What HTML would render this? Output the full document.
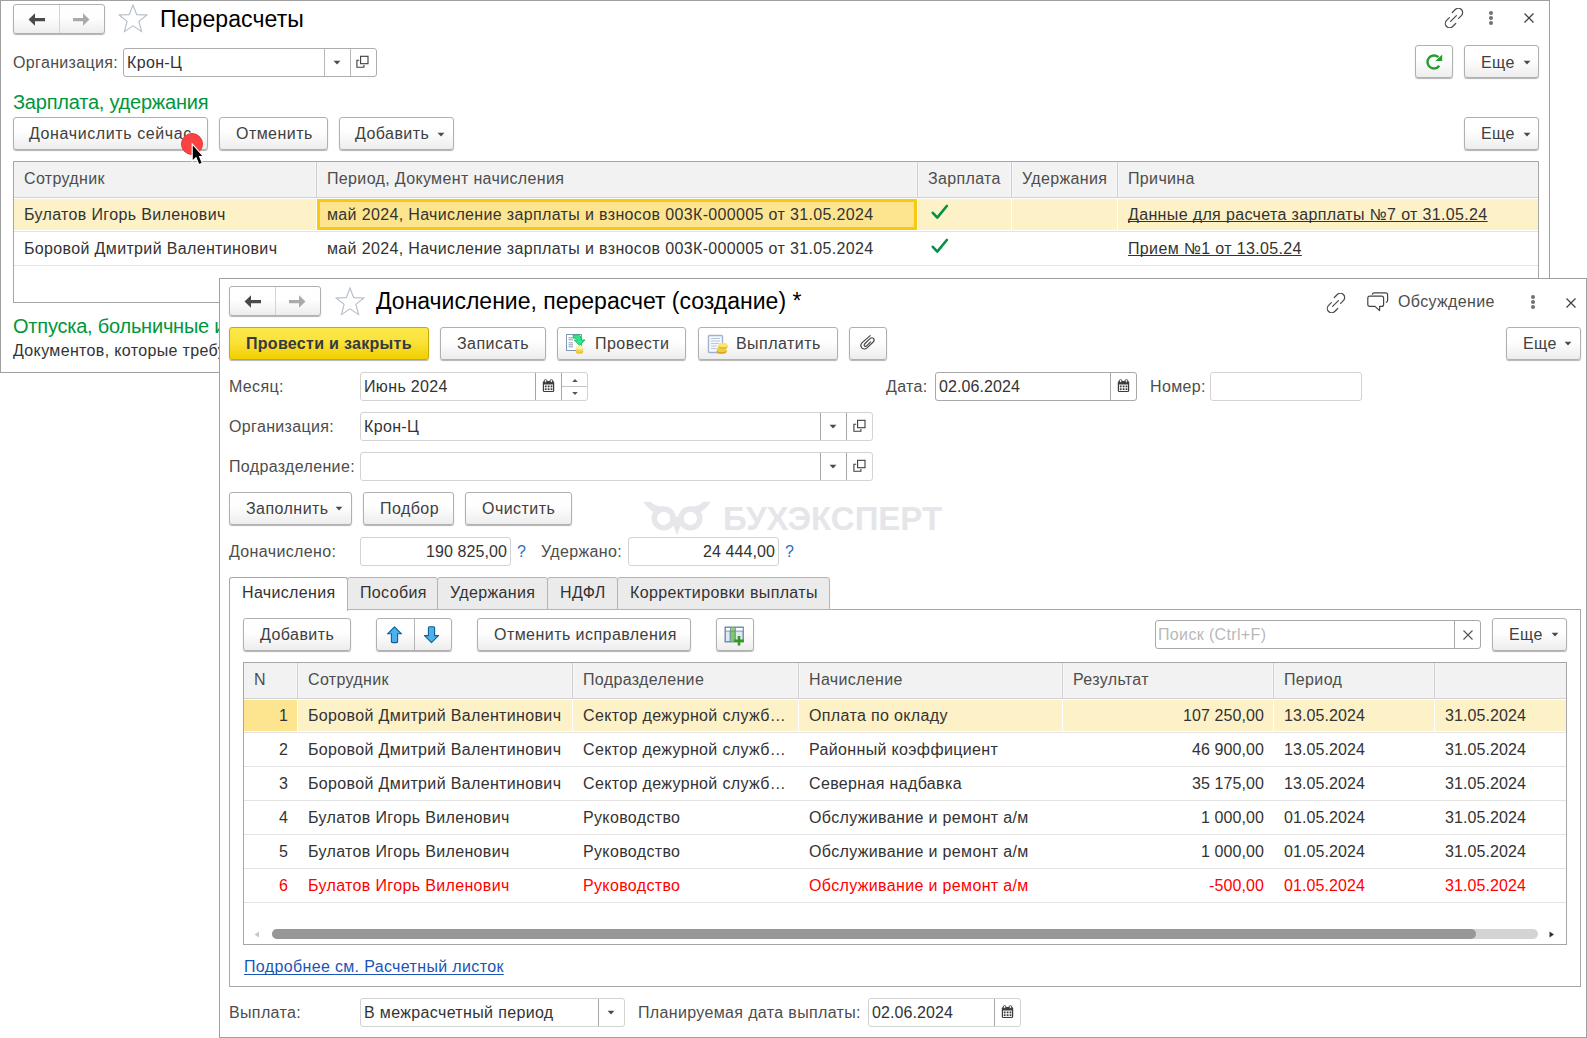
<!DOCTYPE html>
<html><head><meta charset="utf-8"><style>
html,body{margin:0;padding:0;background:#fff;width:1587px;height:1038px;overflow:hidden;position:relative}
.t{position:absolute;white-space:nowrap;font-family:"Liberation Sans", sans-serif;line-height:1;letter-spacing:0.35px}
.t u{text-decoration-skip-ink:none;text-underline-offset:1px}
.b{position:absolute}
.btn{position:absolute;border:1px solid #b0b0b0;border-radius:3px;background:linear-gradient(#ffffff 0%,#fefefe 45%,#ededed 100%);box-shadow:0 1px 1px rgba(0,0,0,0.30)}
</style></head><body>
<div class="b" style="left:0px;top:0px;width:1550px;height:373px;border:1px solid #a0a0a0;box-sizing:border-box;background:#fff"></div>
<div class="btn" style="left:13px;top:4px;width:90px;height:28px;"></div>
<div class="b" style="left:59px;top:5px;width:1px;height:28px;background:#d4d4d4"></div>
<svg class="b" style="left:28px;top:13px" width="18" height="14" viewBox="0 0 18 14"><polygon points="0.5,6.5 7,0.3 7,5 17,5 17,8.2 7,8.2 7,12.7" fill="#4a4a4a"/></svg>
<svg class="b" style="left:72px;top:13px" width="18" height="14" viewBox="0 0 18 14"><polygon points="17.5,6.5 11,0.3 11,5 1,5 1,8.2 11,8.2 11,12.7" fill="#aaaaaa"/></svg>
<svg class="b" style="left:118px;top:4px" width="30" height="29" viewBox="0 0 30 29"><polygon points="15,1 18.7,10.6 28.8,11 20.9,17.4 23.6,27.6 15,21.8 6.4,27.6 9.1,17.4 1.2,11 11.3,10.6" fill="none" stroke="#b4bcc6" stroke-width="1.1" stroke-linejoin="miter"/></svg>
<div class="t" style="left:160px;top:8px;font-size:23px;color:#000;font-weight:normal;letter-spacing:0.1px">Перерасчеты</div>
<svg class="b" style="left:1444px;top:8px" width="20" height="20" viewBox="0 0 20 20"><path d="M8.3 4.5 L11.3 1.5 A4.3 4.3 0 0 1 17.4 7.6 L14.6 10.4 M5.4 9.6 L2.6 12.4 A4.3 4.3 0 0 0 8.7 18.5 L11.7 15.5 M6.6 13.4 L12.4 7.6" fill="none" stroke="#4d4d4d" stroke-width="1.25" stroke-linecap="round"/></svg>
<div class="b" style="left:1489px;top:10.5px;width:4px;height:4px;border-radius:2px;background:#707070"></div>
<div class="b" style="left:1489px;top:15.5px;width:4px;height:4px;border-radius:2px;background:#707070"></div>
<div class="b" style="left:1489px;top:20.5px;width:4px;height:4px;border-radius:2px;background:#707070"></div>
<svg class="b" style="left:1524px;top:13px" width="10" height="10" viewBox="0 0 10 10"><path d="M0.5 0.5 L9.5 9.5 M9.5 0.5 L0.5 9.5" stroke="#3d3d3d" stroke-width="1.2"/></svg>
<div class="t" style="left:13px;top:55px;font-size:16px;color:#4d4d4d;font-weight:normal;">Организация:</div>
<div class="b" style="left:123px;top:48px;width:252px;height:27px;border:1px solid #adadad;border-radius:3px;background:#fff"></div>
<div class="b" style="left:324px;top:49px;width:1px;height:27px;background:#b8b8b8"></div>
<div class="b" style="left:350px;top:49px;width:1px;height:27px;background:#b8b8b8"></div>
<div class="t" style="left:127px;top:55px;font-size:16px;color:#333333;font-weight:normal;">Крон-Ц</div>
<svg class="b" style="left:333px;top:60px" width="8" height="6" viewBox="0 0 8 6"><polygon points="0.6,0.8 7.4,0.8 4,4.4" fill="#4a4a4a"/></svg>
<svg class="b" style="left:356px;top:55px" width="14" height="14" viewBox="0 0 14 14"><rect x="4.6" y="1.3" width="7.4" height="7.4" fill="none" stroke="#3d3d3d" stroke-width="1.1"/><path d="M3.2 5.2 H0.9 V12.3 H7.9 V10" fill="none" stroke="#3d3d3d" stroke-width="1.1"/></svg>
<div class="btn" style="left:1415px;top:45px;width:36px;height:31px;"></div>
<svg class="b" style="left:1424px;top:52px" width="20" height="20" viewBox="0 0 20 20"><path d="M15.3 13.7 A6.5 6.5 0 1 1 14.4 5.2" fill="none" stroke="#22a02a" stroke-width="2.4"/><polygon points="11.4,9 18.2,2.6 18.2,9" fill="#22a02a"/></svg>
<div class="btn" style="left:1464px;top:45px;width:73px;height:31px;"></div>
<div class="t" style="left:1481px;top:55px;font-size:16px;color:#404040;font-weight:normal;letter-spacing:0.45px">Еще</div>
<svg class="b" style="left:1523px;top:60px" width="8" height="6" viewBox="0 0 8 6"><polygon points="0.6,0.8 7.4,0.8 4,4.4" fill="#4a4a4a"/></svg>
<div class="t" style="left:13px;top:92px;font-size:20px;color:#00963c;font-weight:normal;letter-spacing:-0.22px">Зарплата, удержания</div>
<div class="btn" style="left:13px;top:117px;width:193px;height:31px;"></div>
<div class="t" style="left:29px;top:126px;font-size:16px;color:#404040;font-weight:normal;letter-spacing:0.6px">Доначислить сейчас</div>
<div class="btn" style="left:219px;top:117px;width:107px;height:31px;"></div>
<div class="t" style="left:236px;top:126px;font-size:16px;color:#404040;font-weight:normal;letter-spacing:0.45px">Отменить</div>
<div class="btn" style="left:339px;top:117px;width:113px;height:31px;"></div>
<div class="t" style="left:355px;top:126px;font-size:16px;color:#404040;font-weight:normal;letter-spacing:0.45px">Добавить</div>
<svg class="b" style="left:437px;top:132px" width="8" height="6" viewBox="0 0 8 6"><polygon points="0.6,0.8 7.4,0.8 4,4.4" fill="#4a4a4a"/></svg>
<div class="btn" style="left:1464px;top:117px;width:73px;height:31px;"></div>
<div class="t" style="left:1481px;top:126px;font-size:16px;color:#404040;font-weight:normal;letter-spacing:0.45px">Еще</div>
<svg class="b" style="left:1523px;top:132px" width="8" height="6" viewBox="0 0 8 6"><polygon points="0.6,0.8 7.4,0.8 4,4.4" fill="#4a4a4a"/></svg>
<div class="b" style="left:13px;top:161px;width:1526px;height:142px;border:1px solid #a6a6a6;box-sizing:border-box;background:#fff"></div>
<div class="b" style="left:14px;top:162px;width:1524px;height:35px;background:#f2f2f2"></div>
<div class="b" style="left:14px;top:197px;width:1524px;height:1px;background:#d2d2d2"></div>
<div class="b" style="left:316px;top:162px;width:1px;height:35px;background:#cbcbcb"></div>
<div class="b" style="left:315px;top:162px;width:1px;height:35px;background:#f8f8f8"></div>
<div class="b" style="left:317px;top:162px;width:1px;height:35px;background:#f8f8f8"></div>
<div class="b" style="left:917px;top:162px;width:1px;height:35px;background:#cbcbcb"></div>
<div class="b" style="left:916px;top:162px;width:1px;height:35px;background:#f8f8f8"></div>
<div class="b" style="left:918px;top:162px;width:1px;height:35px;background:#f8f8f8"></div>
<div class="b" style="left:1011px;top:162px;width:1px;height:35px;background:#cbcbcb"></div>
<div class="b" style="left:1010px;top:162px;width:1px;height:35px;background:#f8f8f8"></div>
<div class="b" style="left:1012px;top:162px;width:1px;height:35px;background:#f8f8f8"></div>
<div class="b" style="left:1117px;top:162px;width:1px;height:35px;background:#cbcbcb"></div>
<div class="b" style="left:1116px;top:162px;width:1px;height:35px;background:#f8f8f8"></div>
<div class="b" style="left:1118px;top:162px;width:1px;height:35px;background:#f8f8f8"></div>
<div class="b" style="left:14px;top:199px;width:302px;height:31px;background:#fdf1c7"></div>
<div class="b" style="left:317px;top:199px;width:600px;height:31px;background:#fdf1c7"></div>
<div class="b" style="left:918px;top:199px;width:93px;height:31px;background:#fdf1c7"></div>
<div class="b" style="left:1012px;top:199px;width:105px;height:31px;background:#fdf1c7"></div>
<div class="b" style="left:1118px;top:199px;width:420px;height:31px;background:#fdf1c7"></div>
<div class="b" style="left:14px;top:231px;width:1524px;height:1px;background:#e4e4e4"></div>
<div class="b" style="left:14px;top:265px;width:1524px;height:1px;background:#e4e4e4"></div>
<div class="t" style="left:24px;top:171px;font-size:16px;color:#4d4d4d;font-weight:normal;">Сотрудник</div>
<div class="t" style="left:327px;top:171px;font-size:16px;color:#4d4d4d;font-weight:normal;">Период, Документ начисления</div>
<div class="t" style="left:928px;top:171px;font-size:16px;color:#4d4d4d;font-weight:normal;">Зарплата</div>
<div class="t" style="left:1022px;top:171px;font-size:16px;color:#4d4d4d;font-weight:normal;">Удержания</div>
<div class="t" style="left:1128px;top:171px;font-size:16px;color:#4d4d4d;font-weight:normal;">Причина</div>
<div class="b" style="left:317px;top:199px;width:600px;height:31px;background:#fde590;border:3px solid #f7c814;box-sizing:border-box"></div>
<div class="t" style="left:24px;top:207px;font-size:16px;color:#333333;font-weight:normal;">Булатов Игорь Виленович</div>
<div class="t" style="left:327px;top:207px;font-size:16px;color:#333333;font-weight:normal;">май 2024, Начисление зарплаты и взносов 003К-000005 от 31.05.2024</div>
<svg class="b" style="left:931px;top:204px" width="18" height="16" viewBox="0 0 18 16"><path d="M1.8 8.8 L6.3 13.6 L15.8 2" fill="none" stroke="#00924a" stroke-width="2.6" stroke-linecap="round" stroke-linejoin="round"/></svg>
<div class="t" style="left:1128px;top:207px;font-size:16px;color:#333333;font-weight:normal;"><u>Данные для расчета зарплаты №7 от 31.05.24</u></div>
<div class="t" style="left:24px;top:241px;font-size:16px;color:#333333;font-weight:normal;">Боровой Дмитрий Валентинович</div>
<div class="t" style="left:327px;top:241px;font-size:16px;color:#333333;font-weight:normal;">май 2024, Начисление зарплаты и взносов 003К-000005 от 31.05.2024</div>
<svg class="b" style="left:931px;top:238px" width="18" height="16" viewBox="0 0 18 16"><path d="M1.8 8.8 L6.3 13.6 L15.8 2" fill="none" stroke="#00924a" stroke-width="2.6" stroke-linecap="round" stroke-linejoin="round"/></svg>
<div class="t" style="left:1128px;top:241px;font-size:16px;color:#333333;font-weight:normal;"><u>Прием №1 от 13.05.24</u></div>
<div class="t" style="left:13px;top:316px;font-size:20px;color:#00963c;font-weight:normal;letter-spacing:-0.22px">Отпуска, больничные и прочие начисления</div>
<div class="t" style="left:13px;top:343px;font-size:16px;color:#333333;font-weight:normal;">Документов, которые требуют перерасчета нет</div>
<div class="b" style="left:181px;top:133px;width:22px;height:22px;border-radius:11px;background:#fe4242;border:1px solid #e03838;box-sizing:border-box"></div>
<svg class="b" style="left:190px;top:142px" width="16" height="25" viewBox="0 0 16 25"><path d="M2.2 2 L2.2 19.3 L6 15.6 L8.9 22.6 L12.4 21.2 L9.6 14.6 L13.6 14.6 Z" fill="#000" stroke="#fff" stroke-width="1.1" stroke-linejoin="miter"/></svg>
<div class="b" style="left:219px;top:278px;width:1368px;height:760px;border:1px solid #a0a0a0;box-sizing:border-box;background:#fff"></div>
<div class="btn" style="left:229px;top:286px;width:90px;height:28px;"></div>
<div class="b" style="left:275px;top:287px;width:1px;height:28px;background:#d4d4d4"></div>
<svg class="b" style="left:244px;top:295px" width="18" height="14" viewBox="0 0 18 14"><polygon points="0.5,6.5 7,0.3 7,5 17,5 17,8.2 7,8.2 7,12.7" fill="#4a4a4a"/></svg>
<svg class="b" style="left:288px;top:295px" width="18" height="14" viewBox="0 0 18 14"><polygon points="17.5,6.5 11,0.3 11,5 1,5 1,8.2 11,8.2 11,12.7" fill="#aaaaaa"/></svg>
<svg class="b" style="left:335px;top:287px" width="30" height="29" viewBox="0 0 30 29"><polygon points="15,1 18.7,10.6 28.8,11 20.9,17.4 23.6,27.6 15,21.8 6.4,27.6 9.1,17.4 1.2,11 11.3,10.6" fill="none" stroke="#b4bcc6" stroke-width="1.1" stroke-linejoin="miter"/></svg>
<div class="t" style="left:376px;top:290px;font-size:23px;color:#000;font-weight:normal;letter-spacing:0px">Доначисление, перерасчет (создание) *</div>
<svg class="b" style="left:1326px;top:293px" width="20" height="20" viewBox="0 0 20 20"><path d="M8.3 4.5 L11.3 1.5 A4.3 4.3 0 0 1 17.4 7.6 L14.6 10.4 M5.4 9.6 L2.6 12.4 A4.3 4.3 0 0 0 8.7 18.5 L11.7 15.5 M6.6 13.4 L12.4 7.6" fill="none" stroke="#4d4d4d" stroke-width="1.25" stroke-linecap="round"/></svg>
<svg class="b" style="left:1367px;top:291px" width="22" height="21" viewBox="0 0 22 21"><g fill="none" stroke="#444" stroke-width="1.2" stroke-linejoin="round"><path d="M2.8 5.2 H14.6 Q16.6 5.2 16.6 7.2 V13.4 Q16.6 15.4 14.6 15.4 H12.6 V19.6 L8 15.4 H2.8 Q0.8 15.4 0.8 13.4 V7.2 Q0.8 5.2 2.8 5.2 Z"/><path d="M5.2 3.6 Q5.6 1.8 7.4 1.8 H18.6 Q20.6 1.8 20.6 3.8 V9.6 Q20.6 11.4 18.8 11.4"/></g></svg>
<div class="t" style="left:1398px;top:294px;font-size:16px;color:#4d4d4d;font-weight:normal;">Обсуждение</div>
<div class="b" style="left:1531px;top:295px;width:4px;height:4px;border-radius:2px;background:#707070"></div>
<div class="b" style="left:1531px;top:300px;width:4px;height:4px;border-radius:2px;background:#707070"></div>
<div class="b" style="left:1531px;top:305px;width:4px;height:4px;border-radius:2px;background:#707070"></div>
<svg class="b" style="left:1566px;top:298px" width="10" height="10" viewBox="0 0 10 10"><path d="M0.5 0.5 L9.5 9.5 M9.5 0.5 L0.5 9.5" stroke="#3d3d3d" stroke-width="1.2"/></svg>
<div class="btn" style="left:229px;top:327px;width:198px;height:31px;background:linear-gradient(#fbe74a 0%,#fae23a 45%,#f1cf00 100%);border-color:#c9ac00"></div>
<div class="t" style="left:246px;top:336px;font-size:16px;color:#333a44;font-weight:bold;letter-spacing:0.3px">Провести и закрыть</div>
<div class="btn" style="left:440px;top:327px;width:104px;height:31px;"></div>
<div class="t" style="left:457px;top:336px;font-size:16px;color:#404040;font-weight:normal;letter-spacing:0.45px">Записать</div>
<div class="btn" style="left:557px;top:327px;width:127px;height:31px;"></div>
<svg class="b" style="left:565px;top:333px" width="22" height="23" viewBox="0 0 22 23"><rect x="1.5" y="1.5" width="15" height="16" fill="#fff" stroke="#8596b2" stroke-width="1"/><path d="M3.5 4.8 H9 M3.5 6.8 H8 M3.5 9.8 H8 M3.5 11.8 H8 M3.5 13.8 H8" stroke="#8b9bb5" stroke-width="1"/><path d="M8 2.2 Q10.5 1.4 13.2 1.8 Q16.4 2.6 16.6 7 L20 7 L14.6 12.4 L9.2 7 L12.6 7 Q12.4 5 8.4 5 Z" fill="#2ee68c" stroke="#17a862" stroke-width="0.8" stroke-linejoin="round"/><ellipse cx="14.5" cy="18.8" rx="3.8" ry="2" fill="#e8c53a"/><ellipse cx="14.5" cy="16.6" rx="3.8" ry="2" fill="#f0d957"/><ellipse cx="14.5" cy="14.4" rx="3.8" ry="1.8" fill="#faf0a8"/></svg>
<div class="t" style="left:595px;top:336px;font-size:16px;color:#404040;font-weight:normal;letter-spacing:0.45px">Провести</div>
<div class="btn" style="left:698px;top:327px;width:138px;height:31px;"></div>
<svg class="b" style="left:707px;top:334px" width="22" height="22" viewBox="0 0 22 22"><rect x="1.5" y="1.5" width="14" height="17" rx="1" fill="#f4f8fc" stroke="#9fb4c8" stroke-width="1.4"/><path d="M4 4.5 H13 M4 7 H13 M4 9.5 H12 M4 12 H10 M4 14.5 H9" stroke="#b8c8d8" stroke-width="1.2"/><ellipse cx="14.6" cy="17.2" rx="5" ry="2.6" fill="#d9a81c"/><ellipse cx="14.6" cy="15.4" rx="5" ry="2.6" fill="#f0cf3c"/><ellipse cx="16" cy="12.6" rx="4.6" ry="2.4" fill="#e4b62a"/><ellipse cx="16" cy="11" rx="4.6" ry="2.3" fill="#fbe86a"/></svg>
<div class="t" style="left:736px;top:336px;font-size:16px;color:#404040;font-weight:normal;letter-spacing:0.45px">Выплатить</div>
<div class="btn" style="left:849px;top:327px;width:36px;height:31px;"></div>
<svg class="b" style="left:858px;top:334px" width="18" height="18" viewBox="0 0 18 18"><path d="M12.2 1.6 L4.2 8.6 Q1.6 11.2 3.8 13.8 Q6.4 16.2 9 13.8 L15.2 8 Q17 6 15.4 4.4 Q13.8 3 12 4.6 L6.6 10 Q5.6 11.2 6.6 12 Q7.6 12.8 8.6 11.8 L12.6 7.8" fill="none" stroke="#444" stroke-width="1.15" stroke-linecap="round"/></svg>
<div class="btn" style="left:1506px;top:327px;width:73px;height:31px;"></div>
<div class="t" style="left:1523px;top:336px;font-size:16px;color:#404040;font-weight:normal;letter-spacing:0.45px">Еще</div>
<svg class="b" style="left:1564px;top:341px" width="8" height="6" viewBox="0 0 8 6"><polygon points="0.6,0.8 7.4,0.8 4,4.4" fill="#4a4a4a"/></svg>
<div class="t" style="left:229px;top:379px;font-size:16px;color:#4d4d4d;font-weight:normal;">Месяц:</div>
<div class="b" style="left:360px;top:372px;width:226px;height:27px;border:1px solid #d3d3d3;border-radius:3px;background:#fff"></div>
<div class="b" style="left:535px;top:373px;width:1px;height:27px;background:#a6a6a6"></div>
<div class="b" style="left:561px;top:373px;width:1px;height:27px;background:#a6a6a6"></div>
<div class="t" style="left:364px;top:379px;font-size:16px;color:#333333;font-weight:normal;">Июнь 2024</div>
<svg class="b" style="left:542px;top:379px" width="13" height="14" viewBox="0 0 13 14"><rect x="0.8" y="2" width="11.4" height="11" rx="1.5" fill="#3d3d3d"/><rect x="2" y="5.5" width="9" height="6.5" fill="#fff"/><circle cx="3.6" cy="2" r="1.4" fill="#fff" stroke="#3d3d3d" stroke-width="0.9"/><circle cx="9.4" cy="2" r="1.4" fill="#fff" stroke="#3d3d3d" stroke-width="0.9"/><rect x="2.8" y="6.5" width="1.8" height="1.8" fill="#3d3d3d"/><rect x="2.8" y="9.3" width="1.8" height="1.8" fill="#3d3d3d"/><rect x="5.699999999999999" y="6.5" width="1.8" height="1.8" fill="#3d3d3d"/><rect x="5.699999999999999" y="9.3" width="1.8" height="1.8" fill="#3d3d3d"/><rect x="8.6" y="6.5" width="1.8" height="1.8" fill="#3d3d3d"/><rect x="8.6" y="9.3" width="1.8" height="1.8" fill="#3d3d3d"/></svg>
<div class="b" style="left:562px;top:386px;width:25px;height:1px;background:#c4c4c4"></div>
<svg class="b" style="left:571px;top:377px" width="8" height="20" viewBox="0 0 8 20"><polygon points="1.2,5 6.8,5 4,2" fill="#555"/><polygon points="1.2,15 6.8,15 4,18" fill="#555"/></svg>
<div class="t" style="left:886px;top:379px;font-size:16px;color:#4d4d4d;font-weight:normal;">Дата:</div>
<div class="b" style="left:935px;top:372px;width:200px;height:27px;border:1px solid #a8a8a8;border-radius:3px;background:#fff"></div>
<div class="b" style="left:1110px;top:373px;width:1px;height:27px;background:#a8a8a8"></div>
<div class="t" style="left:939px;top:379px;font-size:16px;color:#333333;font-weight:normal;;letter-spacing:0.1px">02.06.2024</div>
<svg class="b" style="left:1117px;top:379px" width="13" height="14" viewBox="0 0 13 14"><rect x="0.8" y="2" width="11.4" height="11" rx="1.5" fill="#3d3d3d"/><rect x="2" y="5.5" width="9" height="6.5" fill="#fff"/><circle cx="3.6" cy="2" r="1.4" fill="#fff" stroke="#3d3d3d" stroke-width="0.9"/><circle cx="9.4" cy="2" r="1.4" fill="#fff" stroke="#3d3d3d" stroke-width="0.9"/><rect x="2.8" y="6.5" width="1.8" height="1.8" fill="#3d3d3d"/><rect x="2.8" y="9.3" width="1.8" height="1.8" fill="#3d3d3d"/><rect x="5.699999999999999" y="6.5" width="1.8" height="1.8" fill="#3d3d3d"/><rect x="5.699999999999999" y="9.3" width="1.8" height="1.8" fill="#3d3d3d"/><rect x="8.6" y="6.5" width="1.8" height="1.8" fill="#3d3d3d"/><rect x="8.6" y="9.3" width="1.8" height="1.8" fill="#3d3d3d"/></svg>
<div class="t" style="left:1150px;top:379px;font-size:16px;color:#4d4d4d;font-weight:normal;">Номер:</div>
<div class="b" style="left:1210px;top:372px;width:150px;height:27px;border:1px solid #d3d3d3;border-radius:3px;background:#fff"></div>
<div class="t" style="left:229px;top:419px;font-size:16px;color:#4d4d4d;font-weight:normal;">Организация:</div>
<div class="b" style="left:360px;top:412px;width:511px;height:27px;border:1px solid #d3d3d3;border-radius:3px;background:#fff"></div>
<div class="b" style="left:820px;top:413px;width:1px;height:27px;background:#a6a6a6"></div>
<div class="b" style="left:846px;top:413px;width:1px;height:27px;background:#a6a6a6"></div>
<div class="t" style="left:364px;top:419px;font-size:16px;color:#333333;font-weight:normal;">Крон-Ц</div>
<svg class="b" style="left:829px;top:424px" width="8" height="6" viewBox="0 0 8 6"><polygon points="0.6,0.8 7.4,0.8 4,4.4" fill="#4a4a4a"/></svg>
<svg class="b" style="left:853px;top:419px" width="14" height="14" viewBox="0 0 14 14"><rect x="4.6" y="1.3" width="7.4" height="7.4" fill="none" stroke="#3d3d3d" stroke-width="1.1"/><path d="M3.2 5.2 H0.9 V12.3 H7.9 V10" fill="none" stroke="#3d3d3d" stroke-width="1.1"/></svg>
<div class="t" style="left:229px;top:459px;font-size:16px;color:#4d4d4d;font-weight:normal;">Подразделение:</div>
<div class="b" style="left:360px;top:452px;width:511px;height:27px;border:1px solid #d3d3d3;border-radius:3px;background:#fff"></div>
<div class="b" style="left:820px;top:453px;width:1px;height:27px;background:#a6a6a6"></div>
<div class="b" style="left:846px;top:453px;width:1px;height:27px;background:#a6a6a6"></div>
<svg class="b" style="left:829px;top:464px" width="8" height="6" viewBox="0 0 8 6"><polygon points="0.6,0.8 7.4,0.8 4,4.4" fill="#4a4a4a"/></svg>
<svg class="b" style="left:853px;top:459px" width="14" height="14" viewBox="0 0 14 14"><rect x="4.6" y="1.3" width="7.4" height="7.4" fill="none" stroke="#3d3d3d" stroke-width="1.1"/><path d="M3.2 5.2 H0.9 V12.3 H7.9 V10" fill="none" stroke="#3d3d3d" stroke-width="1.1"/></svg>
<div class="btn" style="left:229px;top:492px;width:121px;height:31px;"></div>
<div class="t" style="left:246px;top:501px;font-size:16px;color:#404040;font-weight:normal;letter-spacing:0.45px">Заполнить</div>
<svg class="b" style="left:335px;top:506px" width="8" height="6" viewBox="0 0 8 6"><polygon points="0.6,0.8 7.4,0.8 4,4.4" fill="#4a4a4a"/></svg>
<div class="btn" style="left:363px;top:492px;width:89px;height:31px;"></div>
<div class="t" style="left:380px;top:501px;font-size:16px;color:#404040;font-weight:normal;letter-spacing:0.45px">Подбор</div>
<div class="btn" style="left:465px;top:492px;width:105px;height:31px;"></div>
<div class="t" style="left:482px;top:501px;font-size:16px;color:#404040;font-weight:normal;letter-spacing:0.45px">Очистить</div>
<div class="t" style="left:723px;top:502px;font-size:33px;color:#e5e5ea;font-weight:bold;letter-spacing:0px">БУХЭКСПЕРТ</div>
<svg class="b" style="left:638px;top:496px" width="80" height="44" viewBox="0 0 80 44"><g fill="#e6e6eb"><circle cx="25.7" cy="22.4" r="12.1"/><circle cx="52.4" cy="22.4" r="12.1"/><polygon points="33,16 39,21.2 45.1,16 46,30 32,30"/><polygon points="35.2,29 42.9,29 39,39.2"/><path d="M5.3 5.8 L12.6 5.8 Q16.6 9.8 22.2 10.4 L25.5 10.6 L16.4 16.4 Q9.6 13.2 5.3 5.8 Z"/><path d="M72.8 5.8 L65.5 5.8 Q61.5 9.8 55.9 10.4 L52.6 10.6 L61.7 16.4 Q68.5 13.2 72.8 5.8 Z"/></g><circle cx="25.7" cy="22.4" r="6.6" fill="#fff"/><circle cx="52.4" cy="22.4" r="6.6" fill="#fff"/></svg>
<div class="t" style="left:229px;top:544px;font-size:16px;color:#4d4d4d;font-weight:normal;">Доначислено:</div>
<div class="b" style="left:360px;top:537px;width:149px;height:27px;border:1px solid #d3d3d3;border-radius:3px;background:#fff"></div>
<div class="t" style="right:1080px;top:544px;font-size:16px;color:#333333;;letter-spacing:0.1px">190 825,00</div>
<div class="t" style="left:517px;top:544px;font-size:16px;color:#1f6fc0;font-weight:normal;">?</div>
<div class="t" style="left:541px;top:544px;font-size:16px;color:#4d4d4d;font-weight:normal;">Удержано:</div>
<div class="b" style="left:628px;top:537px;width:149px;height:27px;border:1px solid #d3d3d3;border-radius:3px;background:#fff"></div>
<div class="t" style="right:812px;top:544px;font-size:16px;color:#333333;;letter-spacing:0.1px">24 444,00</div>
<div class="t" style="left:785px;top:544px;font-size:16px;color:#1f6fc0;font-weight:normal;">?</div>
<div class="b" style="left:229px;top:609px;width:1352px;height:378px;border:1px solid #a8a8a8;box-sizing:border-box;background:#fff"></div>
<div class="b" style="left:229px;top:577px;width:119px;height:34px;border:1px solid #a8a8a8;border-bottom:none;border-radius:3px 3px 0 0;box-sizing:border-box;background:#fff"></div>
<div class="t" style="left:242px;top:585px;font-size:16px;color:#333333;font-weight:normal;">Начисления</div>
<div class="b" style="left:347px;top:577px;width:91px;height:33px;border:1px solid #b4b4b4;border-radius:3px 3px 0 0;box-sizing:border-box;background:#ebebeb"></div>
<div class="t" style="left:360px;top:585px;font-size:16px;color:#333333;font-weight:normal;">Пособия</div>
<div class="b" style="left:437px;top:577px;width:111px;height:33px;border:1px solid #b4b4b4;border-radius:3px 3px 0 0;box-sizing:border-box;background:#ebebeb"></div>
<div class="t" style="left:450px;top:585px;font-size:16px;color:#333333;font-weight:normal;">Удержания</div>
<div class="b" style="left:547px;top:577px;width:71px;height:33px;border:1px solid #b4b4b4;border-radius:3px 3px 0 0;box-sizing:border-box;background:#ebebeb"></div>
<div class="t" style="left:560px;top:585px;font-size:16px;color:#333333;font-weight:normal;">НДФЛ</div>
<div class="b" style="left:617px;top:577px;width:213px;height:33px;border:1px solid #b4b4b4;border-radius:3px 3px 0 0;box-sizing:border-box;background:#ebebeb"></div>
<div class="t" style="left:630px;top:585px;font-size:16px;color:#333333;font-weight:normal;">Корректировки выплаты</div>
<div class="btn" style="left:243px;top:618px;width:106px;height:31px;"></div>
<div class="t" style="left:260px;top:627px;font-size:16px;color:#404040;font-weight:normal;letter-spacing:0.45px">Добавить</div>
<div class="btn" style="left:376px;top:618px;width:74px;height:31px;"></div>
<div class="b" style="left:414px;top:619px;width:1px;height:31px;background:#b4b4b4"></div>
<svg class="b" style="left:387px;top:626px" width="16" height="18" viewBox="0 0 16 18"><path d="M7.5 0.8 L14.5 7.8 H10.6 V15.6 Q10.6 16.6 9.6 16.6 H5.4 Q4.4 16.6 4.4 15.6 V7.8 H0.5 Z" fill="#4db0ec" stroke="#0f5d96" stroke-width="1.1" stroke-linejoin="round"/></svg>
<svg class="b" style="left:424px;top:626px" width="16" height="18" viewBox="0 0 16 18"><path d="M7.5 16.6 L14.5 9.6 H10.6 V1.8 Q10.6 0.8 9.6 0.8 H5.4 Q4.4 0.8 4.4 1.8 V9.6 H0.5 Z" fill="#4db0ec" stroke="#0f5d96" stroke-width="1.1" stroke-linejoin="round"/></svg>
<div class="btn" style="left:477px;top:618px;width:212px;height:31px;"></div>
<div class="t" style="left:494px;top:627px;font-size:16px;color:#404040;font-weight:normal;letter-spacing:0.45px">Отменить исправления</div>
<div class="btn" style="left:716px;top:618px;width:36px;height:31px;"></div>
<svg class="b" style="left:724px;top:626px" width="22" height="20" viewBox="0 0 22 20"><rect x="1.2" y="1.2" width="18" height="14.6" fill="#dfe9f3" stroke="#6f8aa4" stroke-width="1.4"/><rect x="6.4" y="1.8" width="4.6" height="13.6" fill="#7ccc5e"/><path d="M1.2 5 H19.2 M6.2 1.2 V15.8 M11.2 1.2 V15.8" stroke="#6f8aa4" stroke-width="1.2"/><rect x="2" y="2" width="4" height="2.4" fill="#fff"/><rect x="12" y="2" width="6.6" height="2.4" fill="#fff"/><rect x="6.9" y="2" width="3.8" height="2.4" fill="#8fd870"/><path d="M15 10 V19.5 M10.2 14.8 H19.8" stroke="#2f9a1c" stroke-width="2.6"/></svg>
<div class="b" style="left:1155px;top:620px;width:324px;height:27px;border:1px solid #a8a8a8;border-radius:3px;background:#fff"></div>
<div class="b" style="left:1454px;top:621px;width:1px;height:27px;background:#a8a8a8"></div>
<div class="t" style="left:1158px;top:627px;font-size:16px;color:#b8b8b8;font-weight:normal;">Поиск (Ctrl+F)</div>
<svg class="b" style="left:1463px;top:630px" width="10" height="10" viewBox="0 0 10 10"><path d="M0.5 0.5 L9.5 9.5 M9.5 0.5 L0.5 9.5" stroke="#555" stroke-width="1.1"/></svg>
<div class="btn" style="left:1492px;top:618px;width:73px;height:31px;"></div>
<div class="t" style="left:1509px;top:627px;font-size:16px;color:#404040;font-weight:normal;letter-spacing:0.45px">Еще</div>
<svg class="b" style="left:1551px;top:632px" width="8" height="6" viewBox="0 0 8 6"><polygon points="0.6,0.8 7.4,0.8 4,4.4" fill="#4a4a4a"/></svg>
<div class="b" style="left:243px;top:662px;width:1324px;height:283px;border:1px solid #a6a6a6;box-sizing:border-box;background:#fff"></div>
<div class="b" style="left:244px;top:663px;width:1322px;height:35px;background:#f2f2f2"></div>
<div class="b" style="left:244px;top:698px;width:1322px;height:1px;background:#d2d2d2"></div>
<div class="b" style="left:297px;top:663px;width:1px;height:35px;background:#cbcbcb"></div>
<div class="b" style="left:296px;top:663px;width:1px;height:35px;background:#f8f8f8"></div>
<div class="b" style="left:298px;top:663px;width:1px;height:35px;background:#f8f8f8"></div>
<div class="b" style="left:572px;top:663px;width:1px;height:35px;background:#cbcbcb"></div>
<div class="b" style="left:571px;top:663px;width:1px;height:35px;background:#f8f8f8"></div>
<div class="b" style="left:573px;top:663px;width:1px;height:35px;background:#f8f8f8"></div>
<div class="b" style="left:798px;top:663px;width:1px;height:35px;background:#cbcbcb"></div>
<div class="b" style="left:797px;top:663px;width:1px;height:35px;background:#f8f8f8"></div>
<div class="b" style="left:799px;top:663px;width:1px;height:35px;background:#f8f8f8"></div>
<div class="b" style="left:1062px;top:663px;width:1px;height:35px;background:#cbcbcb"></div>
<div class="b" style="left:1061px;top:663px;width:1px;height:35px;background:#f8f8f8"></div>
<div class="b" style="left:1063px;top:663px;width:1px;height:35px;background:#f8f8f8"></div>
<div class="b" style="left:1273px;top:663px;width:1px;height:35px;background:#cbcbcb"></div>
<div class="b" style="left:1272px;top:663px;width:1px;height:35px;background:#f8f8f8"></div>
<div class="b" style="left:1274px;top:663px;width:1px;height:35px;background:#f8f8f8"></div>
<div class="b" style="left:1434px;top:663px;width:1px;height:35px;background:#cbcbcb"></div>
<div class="b" style="left:1433px;top:663px;width:1px;height:35px;background:#f8f8f8"></div>
<div class="b" style="left:1435px;top:663px;width:1px;height:35px;background:#f8f8f8"></div>
<div class="t" style="left:254px;top:672px;font-size:16px;color:#4d4d4d;font-weight:normal;">N</div>
<div class="t" style="left:308px;top:672px;font-size:16px;color:#4d4d4d;font-weight:normal;">Сотрудник</div>
<div class="t" style="left:583px;top:672px;font-size:16px;color:#4d4d4d;font-weight:normal;">Подразделение</div>
<div class="t" style="left:809px;top:672px;font-size:16px;color:#4d4d4d;font-weight:normal;">Начисление</div>
<div class="t" style="left:1073px;top:672px;font-size:16px;color:#4d4d4d;font-weight:normal;">Результат</div>
<div class="t" style="left:1284px;top:672px;font-size:16px;color:#4d4d4d;font-weight:normal;">Период</div>
<div class="b" style="left:244px;top:700px;width:53px;height:31px;background:#fde590"></div>
<div class="b" style="left:298px;top:700px;width:274px;height:31px;background:#fdf1c7"></div>
<div class="b" style="left:573px;top:700px;width:225px;height:31px;background:#fdf1c7"></div>
<div class="b" style="left:799px;top:700px;width:263px;height:31px;background:#fdf1c7"></div>
<div class="b" style="left:1063px;top:700px;width:210px;height:31px;background:#fdf1c7"></div>
<div class="b" style="left:1274px;top:700px;width:160px;height:31px;background:#fdf1c7"></div>
<div class="b" style="left:1435px;top:700px;width:131px;height:31px;background:#fdf1c7"></div>
<div class="b" style="left:244px;top:732px;width:1322px;height:1px;background:#e4e4e4"></div>
<div class="t" style="right:1299px;top:708px;font-size:16px;color:#333333;;letter-spacing:0.1px">1</div>
<div class="t" style="left:308px;top:708px;font-size:16px;color:#333333;font-weight:normal;">Боровой Дмитрий Валентинович</div>
<div class="t" style="left:583px;top:708px;font-size:16px;color:#333333;font-weight:normal;">Сектор дежурной служб…</div>
<div class="t" style="left:809px;top:708px;font-size:16px;color:#333333;font-weight:normal;">Оплата по окладу</div>
<div class="t" style="right:323px;top:708px;font-size:16px;color:#333333;;letter-spacing:0.1px">107 250,00</div>
<div class="t" style="left:1284px;top:708px;font-size:16px;color:#333333;font-weight:normal;;letter-spacing:0.1px">13.05.2024</div>
<div class="t" style="left:1445px;top:708px;font-size:16px;color:#333333;font-weight:normal;;letter-spacing:0.1px">31.05.2024</div>
<div class="b" style="left:244px;top:766px;width:1322px;height:1px;background:#e4e4e4"></div>
<div class="t" style="right:1299px;top:742px;font-size:16px;color:#333333;;letter-spacing:0.1px">2</div>
<div class="t" style="left:308px;top:742px;font-size:16px;color:#333333;font-weight:normal;">Боровой Дмитрий Валентинович</div>
<div class="t" style="left:583px;top:742px;font-size:16px;color:#333333;font-weight:normal;">Сектор дежурной служб…</div>
<div class="t" style="left:809px;top:742px;font-size:16px;color:#333333;font-weight:normal;">Районный коэффициент</div>
<div class="t" style="right:323px;top:742px;font-size:16px;color:#333333;;letter-spacing:0.1px">46 900,00</div>
<div class="t" style="left:1284px;top:742px;font-size:16px;color:#333333;font-weight:normal;;letter-spacing:0.1px">13.05.2024</div>
<div class="t" style="left:1445px;top:742px;font-size:16px;color:#333333;font-weight:normal;;letter-spacing:0.1px">31.05.2024</div>
<div class="b" style="left:244px;top:800px;width:1322px;height:1px;background:#e4e4e4"></div>
<div class="t" style="right:1299px;top:776px;font-size:16px;color:#333333;;letter-spacing:0.1px">3</div>
<div class="t" style="left:308px;top:776px;font-size:16px;color:#333333;font-weight:normal;">Боровой Дмитрий Валентинович</div>
<div class="t" style="left:583px;top:776px;font-size:16px;color:#333333;font-weight:normal;">Сектор дежурной служб…</div>
<div class="t" style="left:809px;top:776px;font-size:16px;color:#333333;font-weight:normal;">Северная надбавка</div>
<div class="t" style="right:323px;top:776px;font-size:16px;color:#333333;;letter-spacing:0.1px">35 175,00</div>
<div class="t" style="left:1284px;top:776px;font-size:16px;color:#333333;font-weight:normal;;letter-spacing:0.1px">13.05.2024</div>
<div class="t" style="left:1445px;top:776px;font-size:16px;color:#333333;font-weight:normal;;letter-spacing:0.1px">31.05.2024</div>
<div class="b" style="left:244px;top:834px;width:1322px;height:1px;background:#e4e4e4"></div>
<div class="t" style="right:1299px;top:810px;font-size:16px;color:#333333;;letter-spacing:0.1px">4</div>
<div class="t" style="left:308px;top:810px;font-size:16px;color:#333333;font-weight:normal;">Булатов Игорь Виленович</div>
<div class="t" style="left:583px;top:810px;font-size:16px;color:#333333;font-weight:normal;">Руководство</div>
<div class="t" style="left:809px;top:810px;font-size:16px;color:#333333;font-weight:normal;">Обслуживание и ремонт а/м</div>
<div class="t" style="right:323px;top:810px;font-size:16px;color:#333333;;letter-spacing:0.1px">1 000,00</div>
<div class="t" style="left:1284px;top:810px;font-size:16px;color:#333333;font-weight:normal;;letter-spacing:0.1px">01.05.2024</div>
<div class="t" style="left:1445px;top:810px;font-size:16px;color:#333333;font-weight:normal;;letter-spacing:0.1px">31.05.2024</div>
<div class="b" style="left:244px;top:868px;width:1322px;height:1px;background:#e4e4e4"></div>
<div class="t" style="right:1299px;top:844px;font-size:16px;color:#333333;;letter-spacing:0.1px">5</div>
<div class="t" style="left:308px;top:844px;font-size:16px;color:#333333;font-weight:normal;">Булатов Игорь Виленович</div>
<div class="t" style="left:583px;top:844px;font-size:16px;color:#333333;font-weight:normal;">Руководство</div>
<div class="t" style="left:809px;top:844px;font-size:16px;color:#333333;font-weight:normal;">Обслуживание и ремонт а/м</div>
<div class="t" style="right:323px;top:844px;font-size:16px;color:#333333;;letter-spacing:0.1px">1 000,00</div>
<div class="t" style="left:1284px;top:844px;font-size:16px;color:#333333;font-weight:normal;;letter-spacing:0.1px">01.05.2024</div>
<div class="t" style="left:1445px;top:844px;font-size:16px;color:#333333;font-weight:normal;;letter-spacing:0.1px">31.05.2024</div>
<div class="b" style="left:244px;top:902px;width:1322px;height:1px;background:#e4e4e4"></div>
<div class="t" style="right:1299px;top:878px;font-size:16px;color:#ff0000;;letter-spacing:0.1px">6</div>
<div class="t" style="left:308px;top:878px;font-size:16px;color:#ff0000;font-weight:normal;">Булатов Игорь Виленович</div>
<div class="t" style="left:583px;top:878px;font-size:16px;color:#ff0000;font-weight:normal;">Руководство</div>
<div class="t" style="left:809px;top:878px;font-size:16px;color:#ff0000;font-weight:normal;">Обслуживание и ремонт а/м</div>
<div class="t" style="right:323px;top:878px;font-size:16px;color:#ff0000;;letter-spacing:0.1px">-500,00</div>
<div class="t" style="left:1284px;top:878px;font-size:16px;color:#ff0000;font-weight:normal;;letter-spacing:0.1px">01.05.2024</div>
<div class="t" style="left:1445px;top:878px;font-size:16px;color:#ff0000;font-weight:normal;;letter-spacing:0.1px">31.05.2024</div>
<div class="b" style="left:272px;top:929px;width:1266px;height:10px;background:#d4d4d4;border-radius:5px"></div>
<div class="b" style="left:272px;top:929px;width:1204px;height:10px;background:#979797;border-radius:5px"></div>
<svg class="b" style="left:254px;top:931px" width="6" height="7" viewBox="0 0 6 7"><polygon points="5,0.5 5,6.5 0.5,3.5" fill="#c8c8c8"/></svg>
<svg class="b" style="left:1549px;top:931px" width="6" height="7" viewBox="0 0 6 7"><polygon points="0.5,0.5 0.5,6.5 5,3.5" fill="#333"/></svg>
<div class="t" style="left:244px;top:959px;font-size:16px;color:#1b55b5;font-weight:normal;text-decoration:underline;text-decoration-skip-ink:none;text-underline-offset:2px">Подробнее см. Расчетный листок</div>
<div class="t" style="left:229px;top:1005px;font-size:16px;color:#4d4d4d;font-weight:normal;">Выплата:</div>
<div class="b" style="left:360px;top:998px;width:263px;height:27px;border:1px solid #d3d3d3;border-radius:3px;background:#fff"></div>
<div class="b" style="left:598px;top:999px;width:1px;height:27px;background:#a6a6a6"></div>
<div class="t" style="left:364px;top:1005px;font-size:16px;color:#333333;font-weight:normal;">В межрасчетный период</div>
<svg class="b" style="left:607px;top:1010px" width="8" height="6" viewBox="0 0 8 6"><polygon points="0.6,0.8 7.4,0.8 4,4.4" fill="#4a4a4a"/></svg>
<div class="t" style="left:638px;top:1005px;font-size:16px;color:#4d4d4d;font-weight:normal;">Планируемая дата выплаты:</div>
<div class="b" style="left:868px;top:998px;width:151px;height:27px;border:1px solid #d3d3d3;border-radius:3px;background:#fff"></div>
<div class="b" style="left:994px;top:999px;width:1px;height:27px;background:#a6a6a6"></div>
<div class="t" style="left:872px;top:1005px;font-size:16px;color:#333333;font-weight:normal;;letter-spacing:0.1px">02.06.2024</div>
<svg class="b" style="left:1001px;top:1005px" width="13" height="14" viewBox="0 0 13 14"><rect x="0.8" y="2" width="11.4" height="11" rx="1.5" fill="#3d3d3d"/><rect x="2" y="5.5" width="9" height="6.5" fill="#fff"/><circle cx="3.6" cy="2" r="1.4" fill="#fff" stroke="#3d3d3d" stroke-width="0.9"/><circle cx="9.4" cy="2" r="1.4" fill="#fff" stroke="#3d3d3d" stroke-width="0.9"/><rect x="2.8" y="6.5" width="1.8" height="1.8" fill="#3d3d3d"/><rect x="2.8" y="9.3" width="1.8" height="1.8" fill="#3d3d3d"/><rect x="5.699999999999999" y="6.5" width="1.8" height="1.8" fill="#3d3d3d"/><rect x="5.699999999999999" y="9.3" width="1.8" height="1.8" fill="#3d3d3d"/><rect x="8.6" y="6.5" width="1.8" height="1.8" fill="#3d3d3d"/><rect x="8.6" y="9.3" width="1.8" height="1.8" fill="#3d3d3d"/></svg>
</body></html>
